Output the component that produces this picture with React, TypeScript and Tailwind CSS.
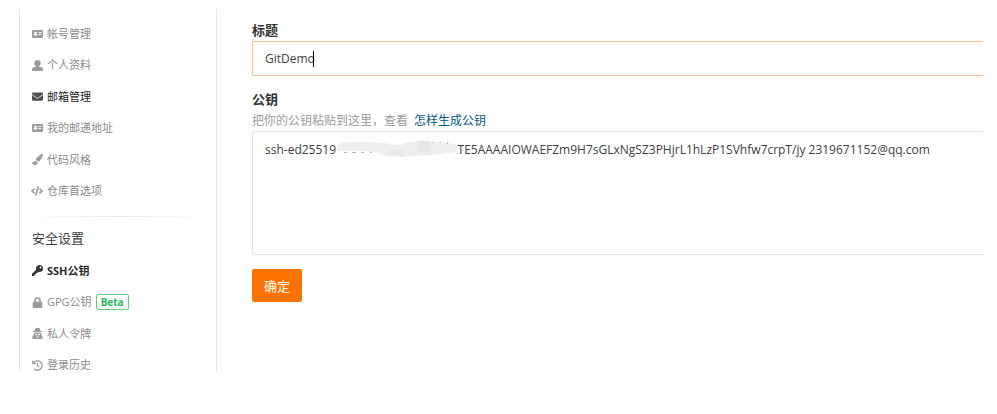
import type { ComponentType } from "react";
import { FaCode, FaEnvelope, FaHistory, FaLock, FaPaintBrush } from "react-icons/fa";

type IconProps = { className?: string };

function CardIcon({ className }: IconProps) {
  return (
    <svg viewBox="0 0 22 16" className={className} fill="currentColor" aria-hidden="true">
      <path
        fillRule="evenodd"
        d="M2 0h18a2 2 0 0 1 2 2v12a2 2 0 0 1-2 2H2a2 2 0 0 1-2-2V2a2 2 0 0 1 2-2zM7 3a2.500 2.500 0 0 0-1.600 4.400C4 8 3 9 3 11h8c0-2-1-3-2.400-3.600A2.500 2.500 0 0 0 7 3zM13 4v2h6V4zM13 8v2h6V8z"
      />
    </svg>
  );
}

function PersonIcon({ className }: IconProps) {
  return (
    <svg viewBox="0 0 22 22" className={className} fill="currentColor" aria-hidden="true">
      <path d="M11 0c3.800 0 6.500 2.600 6.500 6.200 0 2.800-1.300 4.800-3.300 6.300v.8c4 .6 7.800 2 7.800 5.200V20a2 2 0 0 1-2 2H2a2 2 0 0 1-2-2v-1.500c0-3.200 3.800-4.600 7.800-5.200v-.8c-2-1.500-3.300-3.500-3.300-6.300C4.500 2.600 7.200 0 11 0z" />
    </svg>
  );
}

function KeyIcon({ className }: IconProps) {
  return (
    <svg viewBox="0 0 22 22" className={className} fill="currentColor" aria-hidden="true">
      <path
        fillRule="evenodd"
        d="M15 0a7 7 0 1 1-2.500 13.500L10.500 16H8v2.500H5.500V21L4.500 22H0v-4.500L8.500 9.500A7 7 0 0 1 15 0zm2 3.200a1.900 1.900 0 1 0 0 3.800 1.900 1.900 0 0 0 0-3.800z"
      />
    </svg>
  );
}

function AgentIcon({ className }: IconProps) {
  return (
    <svg viewBox="0 0 22 22" className={className} fill="currentColor" aria-hidden="true">
      <path
        fillRule="evenodd"
        d="M7 0h8l2 6h3v2H2V6h3zM4 9.500h14V13l3 3v6H1v-6l3-3zM6 12v2.500h4V12zm6 0v2.500h4V12zM8 17l3 3 3-3z"
      />
    </svg>
  );
}

type Item = {
  label: string;
  icon: ComponentType<IconProps>;
  iconClass: string;
  textClass: string;
  badge?: string;
};

const muted = "text-[#8c8c8c]";
const mutedIcon = "text-[#9b9b9b]";

const general: Item[] = [
  { label: "帐号管理", icon: CardIcon, iconClass: `w-[11px] h-2 ${mutedIcon}`, textClass: muted },
  { label: "个人资料", icon: PersonIcon, iconClass: `w-[11px] h-[11px] ${mutedIcon}`, textClass: muted },
  { label: "邮箱管理", icon: FaEnvelope, iconClass: "w-[11px] h-[11px] text-[#505050]", textClass: "text-[#1c1c1c]" },
  { label: "我的邮递地址", icon: CardIcon, iconClass: `w-[11px] h-2 ${mutedIcon}`, textClass: muted },
  { label: "代码风格", icon: FaPaintBrush, iconClass: `w-[11px] h-[11px] ${mutedIcon}`, textClass: muted },
  { label: "仓库首选项", icon: FaCode, iconClass: `w-3 h-3 ${mutedIcon}`, textClass: muted },
];

const security: Item[] = [
  { label: "SSH公钥", icon: KeyIcon, iconClass: "w-[11px] h-[11px] text-[#333]", textClass: "font-bold text-[#2b2b2b]" },
  { label: "GPG公钥", icon: FaLock, iconClass: `w-[11px] h-[11px] ${mutedIcon}`, textClass: muted, badge: "Beta" },
  { label: "私人令牌", icon: AgentIcon, iconClass: `w-[11px] h-[11px] ${mutedIcon}`, textClass: muted },
  { label: "登录历史", icon: FaHistory, iconClass: `w-[11px] h-[11px] ${mutedIcon}`, textClass: muted },
];

function NavItem({ item }: { item: Item }) {
  const Icon = item.icon;
  return (
    <li className="flex items-center">
      <a href="#" className={`flex items-center gap-1 text-[11px] leading-4 ${item.textClass}`}>
        <span className="flex w-3 justify-center">
          <Icon className={`shrink-0 ${item.iconClass}`} />
        </span>
        {item.label}
        {item.badge && (
          <span className="rounded-[2px] border border-[#5fcf80] px-1 text-[10px] font-bold leading-[14px] text-[#2cb656]">
            {item.badge}
          </span>
        )}
      </a>
    </li>
  );
}

export default function App() {
  return (
    <div className="flex min-h-screen items-start bg-white pl-[19px] pr-[14px] pt-[9px] font-['Open_Sans','Noto_Sans_CJK_SC',sans-serif] text-[#333]">
      <nav className="h-[363px] w-[198px] shrink-0 overflow-hidden border-x border-[#e6e6e8] pt-[9px]">
        <ul className="grid h-[189px] grid-rows-6 pl-[11px]">
          {general.map((item) => (
            <NavItem key={item.label} item={item} />
          ))}
        </ul>
        <div className="mt-[9px] h-px bg-linear-to-r from-white via-[#e8e8e8] to-white" />
        <h2 className="mt-3 pl-3 text-[13px] leading-[18px] text-[#404040]">安全设置</h2>
        <ul className="mt-2 grid h-[126px] grid-rows-4 pl-[11px]">
          {security.map((item) => (
            <NavItem key={item.label} item={item} />
          ))}
        </ul>
      </nav>

      <form className="min-w-0 flex-1 pl-[35px] pt-3" onSubmit={(e) => e.preventDefault()}>
        <label htmlFor="title" className="block text-[13px] font-bold leading-[18px]">
          标题
        </label>
        <div className="relative mt-[2px]">
          <input
            id="title"
            defaultValue="GitDemo"
            className="block h-[35px] w-full border border-r-0 border-[#fdbf8f] px-3 text-[12px] text-[#404040] outline-none"
          />
          <span className="absolute left-[61px] top-[10px] h-4 w-px bg-black" />
        </div>
        <label htmlFor="key" className="mt-[14px] block text-[13px] font-bold leading-[18px]">
          公钥
        </label>
        <p className="flex gap-1.5 pb-px pt-1 text-[12px] leading-[18px] text-[#9b9b9b]">
          把你的公钥粘贴到这里，查看
          <a href="#" className="text-[#005980]">
            怎样生成公钥
          </a>
        </p>
        <div className="relative">
          <textarea
            id="key"
            wrap="off"
            defaultValue="ssh-ed25519 AAAAC3NzaC1lZDI1NTE5AAAAIOWAEFZm9H7sGLxNgSZ3PHjrL1hLzP1SVhfw7crpT/jy 2319671152@qq.com"
            className="block h-[124px] w-full resize-none overflow-hidden rounded-l-[3px] border border-r-0 border-[#e2e3e6] px-3 py-[9px] text-[12px] leading-[18px] text-[#404040] outline-none"
          />
          <svg viewBox="0 0 121 18" className="absolute left-[84px] top-[9px] h-[18px] w-[121px]" aria-hidden="true">
            <path d="M0 0h121v18H0z" fill="#fff" />
            <path
              d="M2 5C5 2 14 2 28 2l20 1 14 2c8-2 14-4 24-4 10 0 18 1 24 2l9 1c3 2 3 6-1 8l-12 2-14 1-16 1-24 1-12-5-18-1H4C0 11 0 7 2 5z"
              fill="#eeeeee"
            />
            <path d="M82 1h12v11H82zM54 10h13v7l-13-3z" fill="#e7e7e7" />
            <path d="M8 12h3v1H8zM16 12h4v1h-4zM25 12h3v1h-3zM34 12h2v1h-2zM96 2h1v1h-1zM104 2h1v1h-1zM111 2h1v2h-1zM120 13h1v1h-1z" fill="#b5b5b5" />
          </svg>
        </div>
        <button type="submit" className="mt-[14px] h-[33px] rounded-[2px] bg-[#fe7300] px-3 text-[13px] leading-[18px] text-white">
          确定
        </button>
      </form>
    </div>
  );
}
